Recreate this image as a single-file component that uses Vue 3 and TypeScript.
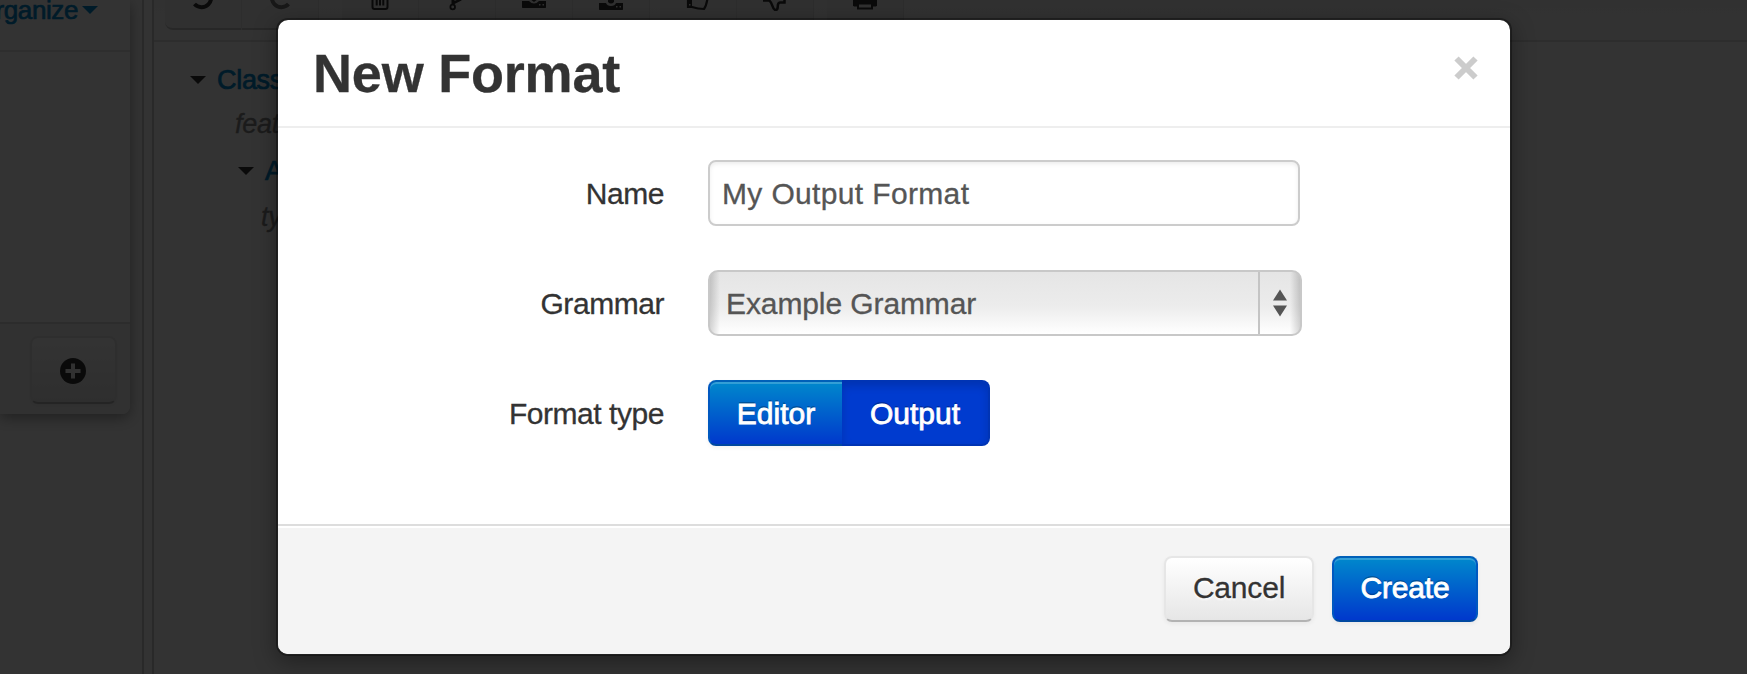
<script setup lang="ts">
import { ref } from 'vue'

const name = ref('My Output Format')
const types = ['Editor', 'Output']
const selected = ref('Output')
</script>

<template>
  <div class="page">
    <div class="app">
      <aside class="side">
        <div class="card">
          <div class="card-head"><span class="link organize">Organize</span><i class="caret blue"></i></div>
          <div class="card-body"></div>
          <div class="card-foot">
            <button class="btn add" aria-label="Add">
              <svg width="26" height="26" viewBox="0 0 26 26"><circle cx="13" cy="13" r="13" fill="#333" /><path d="M13 5.500v15M5.500 13h15" stroke="#f5f5f5" stroke-width="4" /></svg>
            </button>
          </div>
        </div>
      </aside>
      <div class="splitter"></div>
      <main class="main">
        <div class="toolbar">
          <div class="group">
            <span class="tool"><svg width="28" height="28" viewBox="0 0 28 28"><path d="M5.500 21A9.500 9.500 0 1 0 5 9" fill="none" stroke="#333" stroke-width="4" /></svg></span>
            <span class="tool faded"><svg width="28" height="28" viewBox="0 0 28 28"><path d="M22.500 21A9.500 9.500 0 1 1 23 9" fill="none" stroke="#777" stroke-width="4" /></svg></span>
          </div>
          <div class="group">
            <span class="tool"><svg width="28" height="28" viewBox="0 0 28 28"><path d="M6.500 6v18q0 2 2 2h11q2 0 2-2V6M10.700 9v13.500M14 9v13.500M17.300 9v13.500M4 6h20" fill="none" stroke="#333" stroke-width="2" /></svg></span>
            <span class="tool"><svg width="28" height="28" viewBox="0 0 28 28"><circle cx="9.700" cy="24" r="2.300" fill="none" stroke="#333" stroke-width="1.800" /><path d="M8.500 22V9h3v9l7-3v2.500l-7 3.500-.5 1z" fill="#333" /></svg></span>
            <span class="tool"><svg width="28" height="28" viewBox="0 0 28 28"><path fill-rule="evenodd" d="M2 18h7q5 5 10 0h7v6.500l-.5.5h-23l-.5-.5zM19 21v1.500h1.500V21zM22.500 21v1.500H24V21zM10 12h8v4l-4 3-4-3z" fill="#333" /></svg></span>
            <span class="tool"><svg width="28" height="28" viewBox="0 0 28 28"><path fill-rule="evenodd" d="M2 20h7q1 3 5 3t5-3h7v6.500l-.5.5h-23l-.5-.5zM19 23v1.500h1.500V23zM22.500 23v1.500H24V23zM11 14h6v5q-3 3-6 0z" fill="#333" /></svg></span>
          </div>
          <div class="group">
            <span class="tool"><svg width="28" height="28" viewBox="0 0 28 28"><path d="M4 13v11h4c6 2 8 2 12 2 3-4 3-9 4-13" fill="none" stroke="#333" stroke-width="2.200" /><path d="M3 13h5v12H3z" fill="#333" /><path d="M5 21h1.500v1.500H5z" fill="#f1f1f1" /></svg></span>
            <span class="tool"><svg width="28" height="28" viewBox="0 0 28 28"><path d="M2 17.500h6c4 2 3 9.500 6.500 9.500 4.500 0 0-7 4.500-7.500h4.500V15" fill="none" stroke="#333" stroke-width="2.500" /></svg></span>
          </div>
          <div class="group">
            <span class="tool"><svg width="28" height="28" viewBox="0 0 28 28"><path d="M2 13h24v9.500l-1 1H3l-1-1z" fill="#333" /><path d="M7 20.500h14v5H7z" fill="#f1f1f1" stroke="#333" stroke-width="2" /></svg></span>
          </div>
        </div>
        <div class="tree">
          <div class="row"><i class="caret"></i><span class="link">Class</span></div>
          <div class="row feature">features</div>
          <div class="row nested"><i class="caret"></i><span class="link">Attribute</span></div>
          <div class="row type">type</div>
        </div>
      </main>
    </div>

    <div class="backdrop">
      <section class="modal" role="dialog" aria-label="New Format">
        <header class="modal-head">
          <h1>New Format</h1>
          <button class="close" aria-label="Close">
            <svg width="24" height="24" viewBox="0 0 24 24"><path d="M2.500 2.500l19 19M21.500 2.500l-19 19" stroke="#ccc" stroke-width="6" /></svg>
          </button>
        </header>
        <div class="modal-body">
          <div class="field">
            <label for="name">Name</label>
            <input id="name" v-model="name" class="input" type="text" />
          </div>
          <div class="field">
            <label>Grammar</label>
            <div class="select">
              <span class="value">Example Grammar</span>
              <span class="arrows">
                <svg width="14" height="28" viewBox="0 0 14 28"><path d="M7 .5l7 11H0zM7 27.500l7-11H0z" fill="#555" /></svg>
              </span>
            </div>
          </div>
          <div class="field">
            <label class="type-label">Format type</label>
            <div class="toggle">
              <button
                v-for="t in types"
                :key="t"
                class="btn primary seg"
                :class="{ active: t === selected }"
                @click="selected = t"
              >{{ t }}</button>
            </div>
          </div>
        </div>
        <footer class="modal-foot">
          <button class="btn cancel">Cancel</button>
          <button class="btn primary create">Create</button>
        </footer>
      </section>
    </div>
  </div>
</template>

<style>
body { margin: 0; overflow: hidden; }
</style>

<style scoped>
* { box-sizing: border-box; }
.page {
  position: relative;
  height: 674px;
  overflow: hidden;
  background: #fdfdfd;
  color: #333;
  font-family: "Liberation Sans", Arial, sans-serif;
  font-size: 30px;
  -webkit-text-stroke: .3px currentColor;
}
.app { display: flex; height: 100%; }
.side { width: 142px; flex: none; }
.card {
  width: 130px;
  height: 414px;
  display: flex;
  flex-direction: column;
  border-radius: 0 0 8px 0;
  background: #fdfdfd;
  box-shadow: 0 4px 14px rgba(0, 0, 0, .36);
}
.card-head {
  height: 52px;
  flex: none;
  display: flex;
  justify-content: flex-end;
  border-bottom: 2px solid #e3e3e3;
  padding-right: 32px;
  font-size: 26px;
  line-height: 20px;
}
.organize { letter-spacing: -.4px; -webkit-text-stroke: .7px #08c; }
.card-head .caret { margin: 6px 0 0 4px; }
.link { color: #08c; -webkit-text-stroke: .7px #08c; }
.caret {
  width: 0;
  height: 0;
  flex: none;
  border: 8px solid transparent;
  border-top-color: #333;
  border-bottom: 0;
}
.caret.blue { border-top-color: #08c; }
.card-body { flex: 1; }
.card-foot {
  height: 92px;
  display: flex;
  justify-content: flex-end;
  padding: 12px 13px 0 0;
  border-top: 2px solid #ddd;
  background: #f5f5f5;
  border-radius: 0 0 8px 0;
}
.btn {
  height: 66px;
  padding: 0;
  display: flex;
  align-items: center;
  justify-content: center;
  border: 2px solid #e6e6e6;
  border-bottom-color: #b3b3b3;
  border-radius: 8px;
  background: linear-gradient(#fff, #e6e6e6);
  box-shadow: 0 2px 4px rgba(0, 0, 0, .05);
  color: #333;
  font: inherit;
  text-shadow: 0 2px 2px rgba(255, 255, 255, .75);
}
.btn.add { width: 87px; height: 68px; padding: 2px 2px 0 0; }
.splitter {
  width: 12px;
  flex: none;
  border: solid #ccc;
  border-width: 0 2px;
}
.main { flex: 1; min-width: 0; }
.toolbar {
  height: 42px;
  display: flex;
  gap: 10px;
  padding-left: 11px;
  border-bottom: 2px solid #dedede;
  background: linear-gradient(#f5f5f5, #fbfbfb);
}
.group {
  height: 30px;
  display: flex;
  border-bottom: 2px solid #c4c4c4;
  border-radius: 0 0 8px 8px;
  background: #f0f0f0;
}
.group:first-child { margin-right: 13px; }
.group:last-child { margin-left: 3px; }
.tool {
  width: 77px;
  height: 30px;
  display: flex;
  justify-content: center;
  border-right: 1px solid #dedede;
}
.tool svg { flex: none; margin-top: -17px; }
.tree { padding-top: 15px; font-size: 27px; letter-spacing: -.3px; }
.row { height: 46px; line-height: 46px; display: flex; align-items: center; padding-left: 36px; }
.row .link { margin-left: 11px; }
.feature { padding-left: 81px; font-style: italic; color: #888; }
.row.feature { height: 42px; }
.row.nested { height: 52px; padding-left: 84px; }
.row.type { height: 40px; line-height: 40px; padding-left: 107px; font-style: italic; color: #888; }
.backdrop {
  position: absolute;
  inset: 0;
  padding: 18px 0 0 276px;
  background: rgba(0, 0, 0, .8);
}
.modal {
  width: 1236px;
  height: 638px;
  display: flex;
  flex-direction: column;
  border: 2px solid rgba(0, 0, 0, .34);
  border-radius: 12px;
  background: #fff;
  background-clip: padding-box;
  box-shadow: 0 6px 22px rgba(0, 0, 0, .36);
}
.modal-head {
  height: 108px;
  flex: none;
  display: flex;
  justify-content: space-between;
  padding: 0 32px 0 35px;
  border-bottom: 2px solid #eee;
}
h1 { margin: 0; font-size: 54px; line-height: 106px; letter-spacing: -.2px; }
.close { height: 24px; margin-top: 36px; padding: 0; border: 0; background: none; }
.close svg { display: block; }
.modal-body {
  flex: 1;
  display: flex;
  flex-direction: column;
  gap: 44px;
  padding-top: 32px;
}
.field { height: 66px; display: flex; align-items: center; }
label { width: 386px; margin-right: 44px; padding-top: 2px; text-align: right; letter-spacing: -.45px; }
.input {
  width: 592px;
  height: 66px;
  padding: 2px 12px 0;
  border: 2px solid #ccc;
  border-radius: 8px;
  background: #fff;
  box-shadow: inset 0 2px 4px rgba(0, 0, 0, .075);
  color: #555;
  font: inherit;
  letter-spacing: .35px;
  outline: 0;
  -webkit-text-stroke: .3px #555;
}
.select {
  width: 594px;
  height: 66px;
  display: flex;
  border: 2px solid #c8c8c8;
  border-radius: 10px;
  background:
    linear-gradient(90deg, rgba(0, 0, 0, .16), transparent 10px, transparent calc(100% - 10px), rgba(0, 0, 0, .16)),
    linear-gradient(#e5e5e5, #ececec 55%, #fff);
  color: #555;
  -webkit-text-stroke: .3px #555;
}
.value { flex: 1; padding-left: 16px; line-height: 64px; letter-spacing: -.1px; }
.arrows {
  width: 42px;
  display: flex;
  align-items: center;
  justify-content: center;
  border-left: 2px solid #c4c4c4;
}
.toggle { display: flex; }
.primary {
  border-color: #0060b8 #0058c0 #0048a0;
  background: linear-gradient(#08c, #0038cc);
  background-clip: border-box;
  box-shadow: inset 0 2px 0 rgba(255, 255, 255, .2), 0 2px 4px rgba(0, 0, 0, .05);
  color: #fff;
  text-shadow: 0 -2px 0 rgba(0, 0, 0, .25);
  -webkit-text-stroke: .8px #fff;
}
.seg { padding-top: 2px; }
.seg:first-child { width: 134px; border-right: 0; border-radius: 8px 0 0 8px; }
.seg:last-child { width: 148px; border-left: 0; border-radius: 0 8px 8px 0; }
.seg.active {
  border-color: #0034b4;
  background: #003bcf;
  box-shadow: inset 0 4px 8px rgba(0, 0, 0, .15);
}
.modal-foot {
  height: 130px;
  flex: none;
  display: flex;
  justify-content: flex-end;
  gap: 18px;
  padding: 30px 32px 0;
  border-top: 2px solid #ddd;
  border-radius: 0 0 10px 10px;
  background: #f4f4f4;
  box-shadow: inset 0 2px 0 #fff;
}
.cancel { width: 150px; padding-bottom: 2px; letter-spacing: -.2px; }
.create { width: 146px; padding-bottom: 2px; letter-spacing: -.2px; }
</style>
